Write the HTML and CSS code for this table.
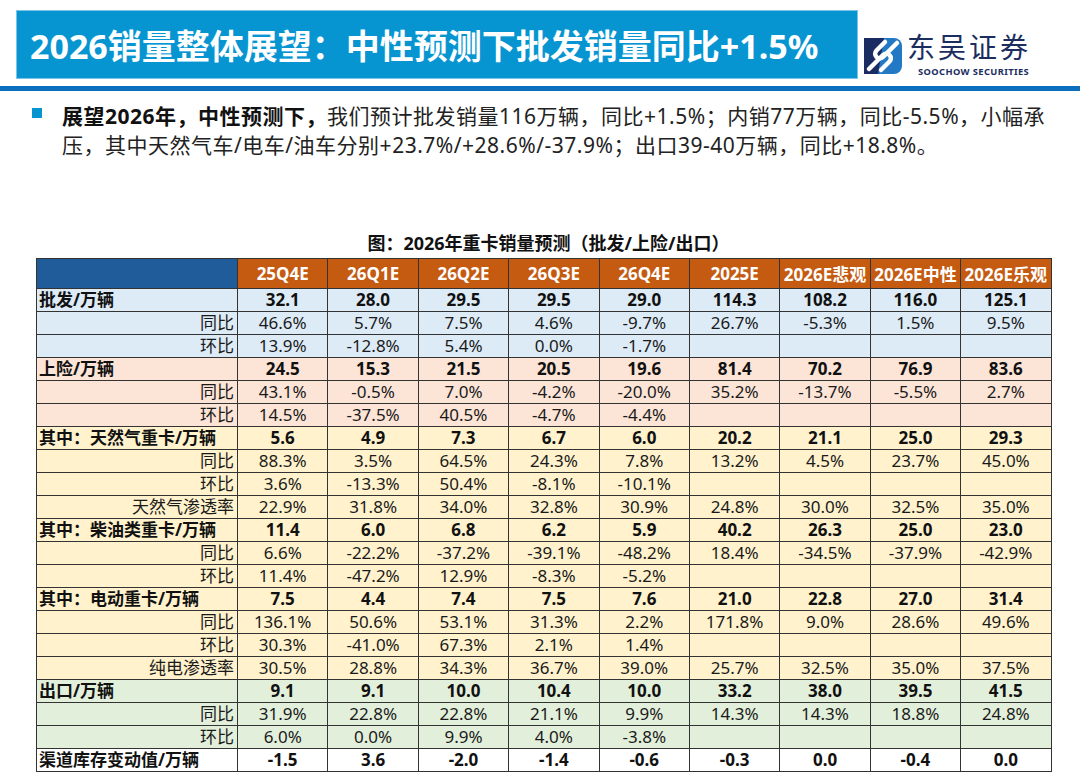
FILE: index.html
```html
<!DOCTYPE html>
<html lang="zh-CN">
<head>
<meta charset="utf-8">
<title>2026销量整体展望</title>
<link rel="stylesheet" href="styles.css">
</head>
<body>
<div class="page">
  <header class="header">
    <div class="title-bar"><h1 class="title">2026销量整体展望：中性预测下批发销量同比+1.5%</h1></div>
    <div class="logo">
      <svg class="logo-icon" viewBox="0 0 38 36" width="38" height="36">
        <rect x="0" y="0" width="24" height="36" fill="#1b2c63"/>
        <path d="M20 0 H30 A8 8 0 0 1 38 8 V28 A8 8 0 0 1 30 36 H14 Z" fill="#2479c4"/>
        <path d="M5 31 L19 17 A4.5 4.5 0 0 1 25.5 23.5 L17 32" fill="none" stroke="#fff" stroke-width="4.5" stroke-linecap="round"/>
        <path d="M33 5 L19 19 A4.5 4.5 0 0 1 12.5 12.5 L21 4" fill="none" stroke="#fff" stroke-width="4.5" stroke-linecap="round"/>
      </svg>
      <div class="logo-text">
        <div class="logo-cn">东吴证券</div>
        <div class="logo-en">SOOCHOW SECURITIES</div>
      </div>
    </div>
  </header>
  <div class="rule"></div>

  <div class="bullet">
    <span class="square"></span>
    <p class="bullet-text"><b>展望2026年，中性预测下，</b>我们预计批发销量116万辆，同比+1.5%；内销77万辆，同比-5.5%，小幅承<br>压，其中天然气车/电车/油车分别+23.7%/+28.6%/-37.9%；出口39-40万辆，同比+18.8%。</p>
  </div>

  <div class="figure">
    <div class="caption">图：2026年重卡销量预测（批发/上险/出口）</div>
    <table class="data">
      <colgroup>
        <col class="c-label"><col><col><col><col><col><col><col><col><col>
      </colgroup>
      <thead>
        <tr>
          <th class="corner"></th>
          <th>25Q4E</th><th>26Q1E</th><th>26Q2E</th><th>26Q3E</th><th>26Q4E</th><th>2025E</th><th>2026E悲观</th><th>2026E中性</th><th>2026E乐观</th>
        </tr>
      </thead>
      <tbody>
        <tr class="blue main"><td class="lbl">批发/万辆</td><td>32.1</td><td>28.0</td><td>29.5</td><td>29.5</td><td>29.0</td><td>114.3</td><td>108.2</td><td>116.0</td><td>125.1</td></tr>
        <tr class="blue"><td class="sub">同比</td><td>46.6%</td><td>5.7%</td><td>7.5%</td><td>4.6%</td><td>-9.7%</td><td>26.7%</td><td>-5.3%</td><td>1.5%</td><td>9.5%</td></tr>
        <tr class="blue"><td class="sub">环比</td><td>13.9%</td><td>-12.8%</td><td>5.4%</td><td>0.0%</td><td>-1.7%</td><td></td><td></td><td></td><td></td></tr>

        <tr class="peach main"><td class="lbl">上险/万辆</td><td>24.5</td><td>15.3</td><td>21.5</td><td>20.5</td><td>19.6</td><td>81.4</td><td>70.2</td><td>76.9</td><td>83.6</td></tr>
        <tr class="peach"><td class="sub">同比</td><td>43.1%</td><td>-0.5%</td><td>7.0%</td><td>-4.2%</td><td>-20.0%</td><td>35.2%</td><td>-13.7%</td><td>-5.5%</td><td>2.7%</td></tr>
        <tr class="peach"><td class="sub">环比</td><td>14.5%</td><td>-37.5%</td><td>40.5%</td><td>-4.7%</td><td>-4.4%</td><td></td><td></td><td></td><td></td></tr>

        <tr class="yellow main"><td class="lbl">其中：天然气重卡/万辆</td><td>5.6</td><td>4.9</td><td>7.3</td><td>6.7</td><td>6.0</td><td>20.2</td><td>21.1</td><td>25.0</td><td>29.3</td></tr>
        <tr class="yellow"><td class="sub">同比</td><td>88.3%</td><td>3.5%</td><td>64.5%</td><td>24.3%</td><td>7.8%</td><td>13.2%</td><td>4.5%</td><td>23.7%</td><td>45.0%</td></tr>
        <tr class="yellow"><td class="sub">环比</td><td>3.6%</td><td>-13.3%</td><td>50.4%</td><td>-8.1%</td><td>-10.1%</td><td></td><td></td><td></td><td></td></tr>
        <tr class="yellow"><td class="sub">天然气渗透率</td><td>22.9%</td><td>31.8%</td><td>34.0%</td><td>32.8%</td><td>30.9%</td><td>24.8%</td><td>30.0%</td><td>32.5%</td><td>35.0%</td></tr>

        <tr class="yellow main"><td class="lbl">其中：柴油类重卡/万辆</td><td>11.4</td><td>6.0</td><td>6.8</td><td>6.2</td><td>5.9</td><td>40.2</td><td>26.3</td><td>25.0</td><td>23.0</td></tr>
        <tr class="yellow"><td class="sub">同比</td><td>6.6%</td><td>-22.2%</td><td>-37.2%</td><td>-39.1%</td><td>-48.2%</td><td>18.4%</td><td>-34.5%</td><td>-37.9%</td><td>-42.9%</td></tr>
        <tr class="yellow"><td class="sub">环比</td><td>11.4%</td><td>-47.2%</td><td>12.9%</td><td>-8.3%</td><td>-5.2%</td><td></td><td></td><td></td><td></td></tr>

        <tr class="yellow main"><td class="lbl">其中：电动重卡/万辆</td><td>7.5</td><td>4.4</td><td>7.4</td><td>7.5</td><td>7.6</td><td>21.0</td><td>22.8</td><td>27.0</td><td>31.4</td></tr>
        <tr class="yellow"><td class="sub">同比</td><td>136.1%</td><td>50.6%</td><td>53.1%</td><td>31.3%</td><td>2.2%</td><td>171.8%</td><td>9.0%</td><td>28.6%</td><td>49.6%</td></tr>
        <tr class="yellow"><td class="sub">环比</td><td>30.3%</td><td>-41.0%</td><td>67.3%</td><td>2.1%</td><td>1.4%</td><td></td><td></td><td></td><td></td></tr>
        <tr class="yellow"><td class="sub">纯电渗透率</td><td>30.5%</td><td>28.8%</td><td>34.3%</td><td>36.7%</td><td>39.0%</td><td>25.7%</td><td>32.5%</td><td>35.0%</td><td>37.5%</td></tr>

        <tr class="green main"><td class="lbl">出口/万辆</td><td>9.1</td><td>9.1</td><td>10.0</td><td>10.4</td><td>10.0</td><td>33.2</td><td>38.0</td><td>39.5</td><td>41.5</td></tr>
        <tr class="green"><td class="sub">同比</td><td>31.9%</td><td>22.8%</td><td>22.8%</td><td>21.1%</td><td>9.9%</td><td>14.3%</td><td>14.3%</td><td>18.8%</td><td>24.8%</td></tr>
        <tr class="green"><td class="sub">环比</td><td>6.0%</td><td>0.0%</td><td>9.9%</td><td>4.0%</td><td>-3.8%</td><td></td><td></td><td></td><td></td></tr>

        <tr class="white main"><td class="lbl">渠道库存变动值/万辆</td><td>-1.5</td><td>3.6</td><td>-2.0</td><td>-1.4</td><td>-0.6</td><td>-0.3</td><td>0.0</td><td>-0.4</td><td>0.0</td></tr>
      </tbody>
    </table>
  </div>
</div>
</body>
</html>
```

FILE: styles.css
```css
* { box-sizing: border-box; }
html, body { margin: 0; padding: 0; background: #fff; }
body {
  font-family: "Noto Sans", "Noto Sans CJK SC", sans-serif;
  color: #1a1a1a;
}
.page { width: 1080px; height: 777px; overflow: hidden; }

.header {
  display: flex;
  align-items: flex-start;
  padding: 10px 0 0 16px;
  height: 79px;
}
.title-bar {
  width: 842px;
  height: 69px;
  background: #0795d2;
  border: 1px solid #7cc3ea;
  display: flex;
  align-items: center;
  padding-left: 13px;
}
.title {
  margin: 0;
  color: #fff;
  font-size: 34px;
  font-weight: 700;
  white-space: nowrap;
}
.logo {
  display: flex;
  align-items: flex-start;
  margin-left: 6px;
  padding-top: 16px;
}
.logo-icon { display: block; margin-top: 12px; }
.logo-text { margin-left: 5px; }
.logo-cn {
  font-family: "Noto Sans CJK SC", sans-serif;
  font-size: 28px;
  line-height: normal;
  color: #1c2d5f;
  letter-spacing: 3px;
}
.logo-en {
  font-family: "Noto Sans", sans-serif;
  font-weight: 700;
  font-size: 9.3px;
  line-height: normal;
  color: #1c2d5f;
  margin-left: 11px;
  margin-top: -1px;
  letter-spacing: 0.4px;
}

.rule {
  margin-top: 7px;
  height: 5px;
  background: #0b6fbe;
}

.bullet {
  display: flex;
  align-items: flex-start;
  padding-left: 32px;
  margin-top: 11px;
}
.square {
  width: 10px;
  height: 10px;
  background: #0795d2;
  margin-top: 6px;
  flex: none;
}
.bullet-text {
  margin: 0 0 0 20px;
  font-size: 21px;
  line-height: 29px;
  letter-spacing: 0.5px;
  color: #222;
  white-space: nowrap;
}
.bullet-text b { font-weight: 700; color: #111; }

.figure {
  margin-top: 71px;
  padding-left: 36px;
}
.caption {
  width: 1015px;
  text-align: center;
  font-weight: 700;
  font-size: 18px;
  line-height: 24px;
  color: #111;
  margin-bottom: 3px;
  padding-left: 10px;
}
.data {
  width: 1015px;
  border-collapse: collapse;
  table-layout: fixed;
  font-size: 17px;
}
.data col { width: 90.4px; }
.data col.c-label { width: 201px; }
.data th, .data td {
  border: 1.5px solid #333;
  padding: 0 3px;
  text-align: center;
  white-space: nowrap;
  overflow: hidden;
}
.data th {
  height: 30px;
  padding: 0;
  background: #c55a11;
  color: #fff;
  font-weight: 700;
  font-size: 17px;
}
.data th.corner { background: #1f5c99; }
.data td { height: 23px; line-height: 20px; color: #1a1a1a; }
.data .main td { font-weight: 700; color: #111; }
.data td.lbl { text-align: left; padding-left: 2px; }
.data td.sub { text-align: right; padding-right: 3px; }

.blue td { background: #ddebf7; }
.peach td { background: #fce4d6; }
.yellow td { background: #fff2cc; }
.green td { background: #e2efda; }
.white td { background: #fff; }
```
